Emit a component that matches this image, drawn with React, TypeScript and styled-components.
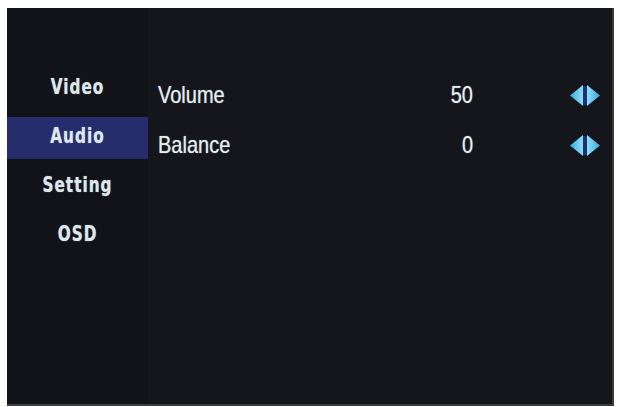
import React from 'react'
import styled, { createGlobalStyle } from 'styled-components'

const GlobalStyle = createGlobalStyle`
  html, body {
    margin: 0;
    padding: 0;
    background: #ffffff;
  }
  body {
    width: 618px;
    height: 407px;
    overflow: hidden;
  }
`

const Screen = styled.div`
  box-sizing: border-box;
  margin: 8px 0 0 7px;
  width: 607px;
  height: 398px;
  background: #14161b;
  border-right: 2px solid #3a3c40;
  border-bottom: 2px solid #3a3c40;
  display: flex;
  color: #e4eef0;
  text-shadow: 0 0 1px rgba(220, 240, 255, 0.6);
`

const Sidebar = styled.ul`
  list-style: none;
  margin: 0;
  padding: 60px 0 0;
  width: 141px;
  background: #121318;
  display: flex;
  flex-direction: column;
  gap: 7px;
`

const MenuItem = styled.li<{ active?: boolean }>`
  height: 42px;
  padding-bottom: 5px;
  box-sizing: border-box;
  display: flex;
  align-items: center;
  justify-content: center;
  background: ${(p) => (p.active ? '#262c6c' : 'transparent')};
  font-family: 'DejaVu Sans Condensed', 'DejaVu Sans', sans-serif;
  font-weight: bold;
  font-size: 17px;
  letter-spacing: 1px;
  color: #dce8ea;
`

/* the OSD font is taller than it is wide */
const Tall = styled.span`
  display: inline-block;
  transform: scaleY(1.2);
`

const Content = styled.div`
  flex: 1;
  padding: 62px 0 0 10px;
  display: flex;
  flex-direction: column;
`

const Row = styled.div`
  height: 50px;
  display: grid;
  grid-template-columns: 1fr 90px 30px;
  column-gap: 97px;
  padding-right: 12px;
  align-items: center;
  font-family: 'Liberation Sans', sans-serif;
  font-size: 20px;
`

const Value = styled(Tall)`
  text-align: right;
`

const Arrows = () => (
  <svg width="30" height="21" viewBox="0 0 30 21">
    <defs>
      <linearGradient id="arrL" x1="0" x2="1" y1="0" y2="0">
        <stop offset="0" stopColor="#3aa6dc" />
        <stop offset="1" stopColor="#8fe0f8" />
      </linearGradient>
      <linearGradient id="arrR" x1="0" x2="1" y1="0" y2="0">
        <stop offset="0" stopColor="#8fe0f8" />
        <stop offset="1" stopColor="#3aa6dc" />
      </linearGradient>
    </defs>
    <polygon points="0,10.5 13,0 13,21" fill="url(#arrL)" />
    <polygon points="17,0 30,10.5 17,21" fill="url(#arrR)" />
    <rect x="13" y="1" width="4" height="19" fill="#1c2f78" />
  </svg>
)

const menu = ['Video', 'Audio', 'Setting', 'OSD']

const settings = [
  { name: 'Volume', value: 50 },
  { name: 'Balance', value: 0 },
]

const App = () => (
  <>
    <GlobalStyle />
    <Screen>
      <Sidebar>
        {menu.map((m) => (
          <MenuItem key={m} active={m === 'Audio'}>
            <Tall>{m}</Tall>
          </MenuItem>
        ))}
      </Sidebar>
      <Content>
        {settings.map((s) => (
          <Row key={s.name}>
            <Tall>{s.name}</Tall>
            <Value>{s.value}</Value>
            <Arrows />
          </Row>
        ))}
      </Content>
    </Screen>
  </>
)

export default App
